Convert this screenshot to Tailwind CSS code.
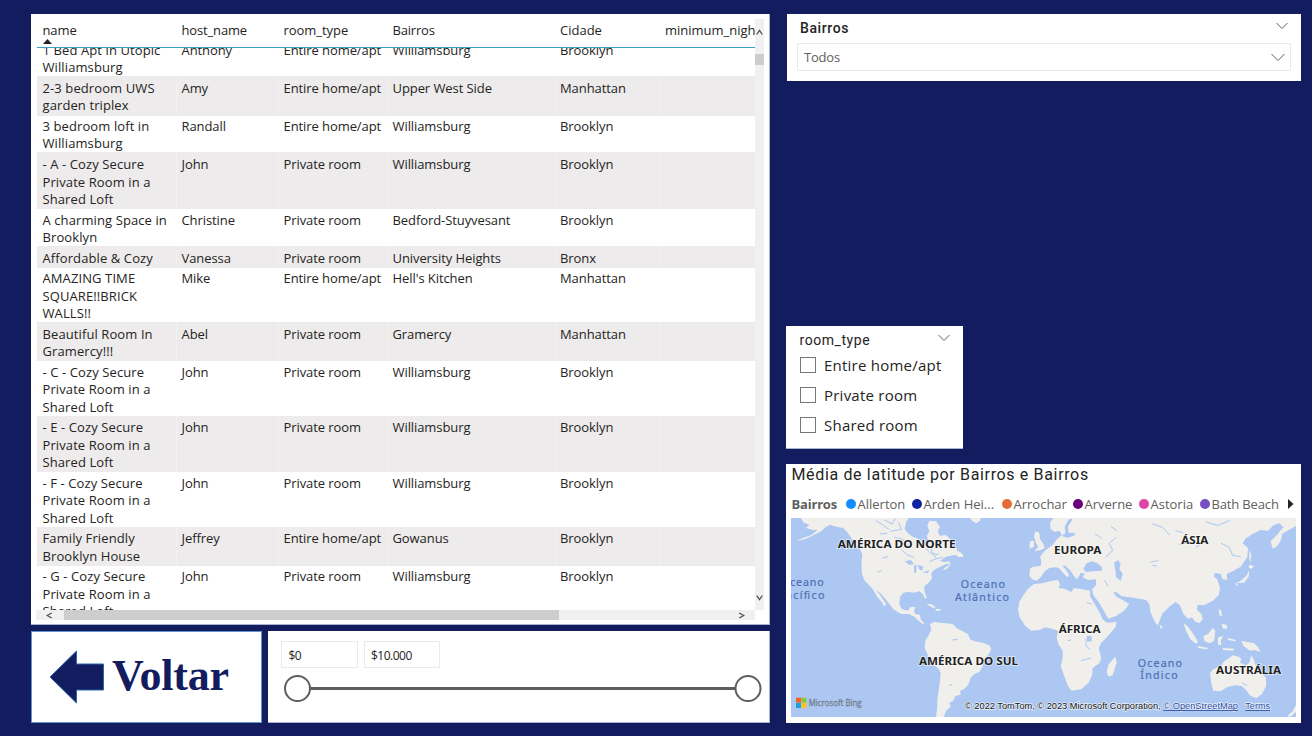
<!DOCTYPE html>
<html lang="pt">
<head>
<meta charset="utf-8">
<title>Airbnb NYC</title>
<script src="https://cdn.jsdelivr.net/npm/@tailwindcss/browser@4"></script>
</head>
<body class="w-[1312px] h-[736px] overflow-hidden bg-[#141c60] font-['Open_Sans','Noto_Sans',sans-serif] text-[#252423]">
<main class="flex h-full pt-[14px] pl-[31px] pr-[11px] pb-[13px] justify-between">

  <div class="flex w-[739px] flex-col gap-[6px]">
    <section class="relative h-[611px] border-b border-r border-[#a9b4d0] bg-white pl-[6px] pt-[5px]">
      <div class="flex">
        <div class="w-[718px]">
          <div class="grid h-[29px] grid-cols-[139px_102px_109px_167.5px_105px_95.5px] overflow-hidden whitespace-nowrap border-b border-[#3d9fc6] text-[13px] leading-[22px] *:pl-[5.5px]">
            <div class="relative tracking-[-0.1px]">name
              <svg class="absolute left-[6px] top-[20px] h-[5px] w-[9px]" viewBox="0 0 9 5"><path d="M0 5 4.5 0 9 5z" fill="#252423"/></svg>
            </div>
            <div class="tracking-[-0.15px]">host_name</div><div class="tracking-[-0.05px]">room_type</div><div class="tracking-[-0.2px]">Bairros</div><div>Cidade</div><div class="overflow-hidden">minimum_nights</div>
          </div>
          <div id="rows" class="h-[562px] overflow-hidden text-[13px] leading-[17.4px]"></div>
        </div>
        <div class="flex h-[591px] w-[9px] flex-col items-center bg-[#f0f0f0]">
          <svg class="mt-[10px] h-[7px] w-[7px]" viewBox="0 0 7 7" fill="none" stroke="#505050" stroke-width="1.3"><path d="M.7 5.5 3.5 1.5 6.3 5.5"/></svg>
          <div class="mt-[18px] h-[11px] w-[9px] bg-[#cdcdcd]"></div>
          <svg class="mt-auto mb-[9px] h-[7px] w-[7px]" viewBox="0 0 7 7" fill="none" stroke="#505050" stroke-width="1.3"><path d="M.7 1.5 3.5 5.5 6.3 1.5"/></svg>
        </div>
      </div>
      <div class="-ml-px flex h-[10px] w-[719px] items-center bg-[#f0f0f0]">
        <svg class="ml-[10px] h-[7px] w-[7px]" viewBox="0 0 7 7" fill="none" stroke="#505050" stroke-width="1.3"><path d="M5.7 1 1.2 3.5 5.7 6"/></svg>
        <div class="ml-[11px] h-[10px] w-[495px] bg-[#cdcdcd]"></div>
        <svg class="ml-[179px] h-[7px] w-[7px]" viewBox="0 0 7 7" fill="none" stroke="#505050" stroke-width="1.3"><path d="M1.2 1 5.7 3.5 1.2 6"/></svg>
      </div>
    </section>

    <div class="flex h-[92px] gap-[6px]">
      <a class="flex w-[231px] items-center border border-[#5f94cc] bg-white pl-[17px]">
        <svg class="h-[54px] w-[56px]" viewBox="0 0 56 54"><path d="M1 27 27.500 1V14H54.500V40H27.500V53z" fill="#141c60" stroke="#2a65ae" stroke-width="1"/></svg>
        <span class="ml-[7px] -mt-[2px] font-['Liberation_Serif',serif] text-[44px] font-bold leading-none tracking-[-0.2px] text-[#141c60]">Voltar</span>
      </a>
      <section class="w-[502px] border-b border-r border-[#a9b4d0] bg-white pl-[13px] pt-[10px]">
        <div class="flex gap-[6px] text-[12px] leading-[27px] *:h-[27px] *:w-[76.5px] *:border *:border-[#eaeaea] *:pl-[6.500px]">
          <div><span class="tracking-[-0.5px]">$0</span></div><div><span class="tracking-[-0.5px]">$10.000</span></div>
        </div>
        <svg class="ml-[2px] mt-[5px] h-[30px] w-[480px]" viewBox="0 0 480 30" fill="#fff" stroke="#605e5c"><path d="M27 15.500H452" stroke-width="3"/><circle cx="14.500" cy="15.500" r="12.500" stroke-width="2"/><circle cx="465" cy="15.500" r="12.500" stroke-width="2"/></svg>
      </section>
    </div>
  </div>

  <div class="flex w-[515px] flex-col">
    <section class="ml-px h-[67px] bg-white px-[10px] pt-[5px]">
      <div class="flex h-[24px] justify-between pl-[3px] pr-[3px]">
        <h2 class="font-[Roboto,sans-serif] text-[14px] font-medium leading-[19px] tracking-[0.6px]">Bairros</h2>
        <svg class="mt-[3px] h-[8px] w-[12px]" viewBox="0 0 12 8" fill="none" stroke="#605e5c"><path d="M.5 1 6 6.500 11.500 1"/></svg>
      </div>
      <div class="flex h-[28px] items-center justify-between border border-[#eaeaea] pl-[6px] pr-[5px] text-[13px] text-[#605e5c]">
        <span class="pt-[2px] tracking-[-0.2px]">Todos</span>
        <svg class="h-[9px] w-[14px]" viewBox="0 0 14 9" fill="none" stroke="#605e5c"><path d="M.5 1 7 7.500 13.500 1"/></svg>
      </div>
    </section>

    <section class="mt-[245px] h-[123px] w-[177px] border-b border-[#a9b4d0] bg-white pl-[13px] pt-[5px]">
      <div class="flex h-[19px] justify-between pr-[13px]">
        <h2 class="pl-[0.5px] font-[Roboto,sans-serif] text-[14px] leading-[19px] tracking-[0.55px]">room_type</h2>
        <svg class="mt-[3px] h-[8px] w-[12px]" viewBox="0 0 12 8" fill="none" stroke="#605e5c"><path d="M.5 1 6 6.500 11.500 1"/></svg>
      </div>
      <ul class="text-[15px] tracking-[0.23px] *:flex *:h-[30px] *:items-center *:gap-[8.500px]">
        <li><i class="ml-[0.5px] size-[16px] border border-[#777]"></i>Entire home/apt</li>
        <li><i class="ml-[0.5px] size-[16px] border border-[#777]"></i>Private room</li>
        <li><i class="ml-[0.5px] size-[16px] border border-[#777]"></i>Shared room</li>
      </ul>
    </section>

    <section class="mt-[15px] h-[259px] bg-white px-[5px]">
      <h2 class="h-[28px] pl-[0.5px] font-[Roboto,sans-serif] text-[16px] leading-[21px] tracking-[0.65px] whitespace-nowrap">Média de latitude por Bairros e Bairros</h2>
      <div class="mb-[2px] flex h-[24px] items-center whitespace-nowrap pl-[0.5px] text-[13px] leading-[20px] text-[#605e5c]">
        <b class="w-[54px] tracking-[-0.2px]">Bairros</b>
        <span class="flex w-[66px] items-center gap-[2px]"><i class="size-[10px] shrink-0 rounded-full bg-[#118dff]"></i>Allerton</span>
        <span class="flex w-[90px] items-center gap-[2px]"><i class="size-[10px] shrink-0 rounded-full bg-[#12239e]"></i>Arden Hei...</span>
        <span class="flex w-[71px] items-center gap-[2px]"><i class="size-[10px] shrink-0 rounded-full bg-[#e66c37]"></i>Arrochar</span>
        <span class="flex w-[66px] items-center gap-[2px]"><i class="size-[10px] shrink-0 rounded-full bg-[#6b007b]"></i>Arverne</span>
        <span class="flex w-[61px] items-center gap-[2px]"><i class="size-[10px] shrink-0 rounded-full bg-[#e044a7]"></i>Astoria</span>
        <span class="flex w-[88.5px] items-center gap-[2px] tracking-[-0.15px]"><i class="size-[10px] shrink-0 rounded-full bg-[#744ec2]"></i>Bath Beach</span>
        <svg class="h-[10px] w-[6px]" viewBox="0 0 6 10"><path d="M0 0 5.500 5 0 10z" fill="#252423"/></svg>
      </div>
      <svg class="block h-[199px] w-[505px]" viewBox="15 12 1515 597">
        <rect x="15" y="12" width="1515" height="597" fill="#abc7f2"/>
        <g fill="#f0efec">
          <!-- North America -->
          <path d="M45 12 52 25 70 33 60 42 80 48 95 47 78 62 50 72 28 82 58 75 85 62 108 50 118 40 132 32 150 38 172 42 185 56 196 72 210 92 222 106 229 122 226 150 228 180 236 200 248 212 262 228 272 246 285 262 296 278 300 270 290 254 278 238 270 228 282 236 296 252 310 270 322 286 345 300 368 300 385 308 398 320 412 332 414 326 404 316 402 302 388 300 384 292 388 278 372 280 366 290 348 286 340 270 342 248 352 236 368 234 384 236 400 232 410 240 418 256 422 250 416 234 414 218 430 204 438 192 436 178 444 168 462 158 480 150 495 150 478 160 470 168 482 166 494 152 490 142 474 144 462 140 480 128 500 124 518 122 512 104 500 92 494 76 478 62 462 66 455 52 462 38 450 22 430 20 424 34 430 52 422 66 430 84 418 96 408 82 396 74 380 68 366 58 356 44 360 28 368 12z"/>
          <path d="M516 110 530 120 532 128 520 130 510 124zM552 12 560 22 572 28 582 20 584 12zM422 270 436 270 450 280 440 282zM448 284 466 286 462 290 450 290z"/>
          <!-- South America -->
          <path d="M432 330 446 324 462 326 480 328 500 330 512 342 530 352 546 360 552 376 566 382 590 386 610 394 616 406 606 424 594 438 590 458 580 474 562 482 554 492 548 510 536 524 522 530 524 542 508 546 502 560 490 566 494 578 480 590 474 609 450 609 454 580 454 556 458 530 462 500 464 478 458 464 440 450 428 428 416 402 418 380 428 364 436 348z"/>
          <!-- Eurasia -->
          <path d="M802 12 792 26 794 46 806 54 820 50 828 62 814 74 800 92 788 102 776 110 762 128 766 140 764 156 742 158 732 164 730 184 738 196 752 200 764 190 776 172 790 162 808 160 818 162 832 178 844 190 850 184 840 168 830 156 836 154 852 168 862 184 872 196 880 186 884 176 896 178 890 190 906 198 930 196 930 214 918 226 922 244 936 262 950 284 962 306 968 314 990 306 1014 290 1030 270 1010 258 992 248 982 236 990 234 1006 246 1030 250 1060 254 1080 258 1090 270 1094 296 1108 326 1116 334 1122 316 1130 298 1150 278 1168 264 1182 274 1192 300 1206 314 1218 310 1226 322 1240 328 1250 316 1246 300 1232 286 1236 272 1254 274 1280 260 1298 244 1302 222 1294 196 1284 188 1286 176 1304 180 1310 196 1324 198 1322 180 1340 172 1364 158 1384 128 1386 102 1370 88 1378 74 1400 60 1424 48 1446 50 1462 34 1480 28 1492 40 1470 66 1454 82 1460 104 1474 96 1486 76 1488 60 1508 48 1530 36 1530 12z"/>
          <path d="M748 52 760 56 762 74 772 90 776 102 764 108 746 112 756 98 750 86 744 68zM732 82 744 80 744 98 730 104z"/>
          <!-- Africa -->
          <path d="M744 210 768 208 800 200 816 198 822 210 818 222 836 224 856 234 864 222 888 226 912 230 912 246 926 270 940 294 950 316 962 326 992 324 988 340 966 366 946 386 938 402 946 432 940 448 920 462 918 484 908 506 886 526 856 530 846 516 834 484 824 456 830 432 830 410 818 392 812 372 816 350 798 344 778 340 760 348 736 350 718 336 702 312 696 288 700 264 712 244 726 224z"/>
          <path d="M988 428 992 446 980 484 968 488 962 474 968 450zM1124 330 1130 342 1122 344z"/>
          <!-- South-East Asia, Japan -->
          <path d="M1192 326 1206 338 1222 360 1236 384 1230 390 1212 374 1200 350zM1236 396 1266 402 1262 406 1236 402zM1252 366 1266 360 1280 342 1288 350 1284 380 1272 388 1256 382zM1296 370 1312 366 1304 380 1306 394 1296 392zM1298 284 1306 290 1308 308 1300 304zM1306 330 1322 332 1324 344 1312 344zM1366 380 1384 384 1404 388 1416 400 1424 414 1406 408 1392 410 1372 396zM1390 152 1404 156 1398 164 1388 162zM1390 168 1388 188 1374 206 1352 208 1370 196 1382 184zM1348 204 1356 212 1350 216zM1390 108 1396 122 1394 146 1390 132zM1326 372 1350 378 1348 382 1326 378zM1310 402 1346 404 1340 410 1312 408z"/>
          <!-- Oceania -->
          <path d="M1272 478 1282 466 1304 456 1316 440 1330 432 1340 424 1358 428 1366 434 1362 446 1380 454 1390 446 1396 424 1404 438 1410 456 1424 474 1440 492 1440 516 1428 540 1412 552 1394 546 1378 526 1366 516 1348 514 1322 520 1304 532 1282 530 1276 508zM1530 572 1520 592 1504 606 1512 609 1530 594z"/>
        </g>
        <g fill="#abc7f2">
          <!-- Seas and lakes -->
          <path d="M892 166 902 148 918 142 934 148 948 160 948 170 924 172 900 174zM984 146 996 138 1004 150 1000 164 1010 180 1004 200 990 190 988 168zM356 142 374 138 384 150 370 152zM384 154 392 154 390 176 384 176zM396 152 412 158 408 170 398 164zM408 176 430 168 426 176zM828 66 846 72 868 62 864 56 848 56 846 38 860 14 848 16 836 38 838 56zM902 366 916 366 918 380 904 384zM358 20 390 70 412 70 404 50 382 46 376 28z"/>
        </g>
        <g fill="none" stroke="#abc7f2" stroke-width="3" stroke-linecap="round">
          <path d="M270 20 292 34 308 46M296 18 318 30 328 14M314 52 346 46 338 26M282 60 302 58M326 70 350 76 364 94M348 108 362 122 384 130M290 132 306 128M276 174 286 170M420 104 434 118 456 122M440 84 436 110 450 132M432 142 452 134 470 130M960 128 980 110 970 88 990 70M976 38 992 50M1100 30 1130 40 1150 62M1094 144 1116 140M1100 154 1112 156M1180 92 1216 84M1230 100 1254 84M1306 88 1330 100 1340 124 1364 128M1260 24 1296 34 1330 20M1170 50 1190 56M900 376 900 396 912 406M886 440 914 432M846 380 854 378M500 378 514 376M490 514 498 512M956 200 966 216M904 266 916 270M1370 508 1382 514M928 60 946 72"/>
        </g>
        <g class="font-['Noto_Sans','Open_Sans',sans-serif]" font-size="34" font-weight="700" fill="#222" stroke="#fff" stroke-opacity=".65" stroke-width="5" paint-order="stroke">
          <text x="155" y="102" textLength="354" lengthAdjust="spacingAndGlyphs">AMÉRICA DO NORTE</text>
          <text x="804" y="121" textLength="142" lengthAdjust="spacingAndGlyphs">EUROPA</text>
          <text x="1186" y="90" textLength="81" lengthAdjust="spacingAndGlyphs">ÁSIA</text>
          <text x="818" y="356" textLength="126" lengthAdjust="spacingAndGlyphs">ÁFRICA</text>
          <text x="399" y="454" textLength="297" lengthAdjust="spacingAndGlyphs">AMÉRICA DO SUL</text>
          <text x="1290" y="479" textLength="195" lengthAdjust="spacingAndGlyphs">AUSTRÁLIA</text>
        </g>
        <g class="font-['Noto_Sans','Open_Sans',sans-serif]" font-size="32" fill="#5070b4" stroke="#5070b4" stroke-width=".6">
          <text x="-15" y="217" textLength="128">Oceano</text>
          <text x="-23" y="255" textLength="138">Pacífico</text>
          <text x="524" y="223" textLength="133">Oceano</text>
          <text x="507" y="260" textLength="162">Atlântico</text>
          <text x="1055" y="458" textLength="133">Oceano</text>
          <text x="1063" y="495" textLength="112">Índico</text>
        </g>
        <path d="M30 551h15v15H30z" fill="#f0642c"/><path d="M46 551h15v15H46z" fill="#8cc63e"/><path d="M30 567h15v15H30z" fill="#1ba1e2"/><path d="M46 567h15v15H46z" fill="#fcc419"/>
        <text x="68" y="576" class="font-['Open_Sans',sans-serif]" font-size="26" fill="#747a88" stroke="#747a88" stroke-width=".8" textLength="159" lengthAdjust="spacingAndGlyphs">Microsoft Bing</text>
        <g class="font-['Liberation_Sans',sans-serif]" font-size="29" fill="#111" stroke="#fff" stroke-opacity=".8" stroke-width="4" paint-order="stroke">
          <text x="537" y="586" textLength="587" lengthAdjust="spacingAndGlyphs">© 2022 TomTom, © 2023 Microsoft Corporation,</text>
          <g fill="#2b4ba0"><text x="1132" y="586" textLength="224" lengthAdjust="spacingAndGlyphs">© OpenStreetMap</text>
          <text x="1378" y="586" textLength="74" lengthAdjust="spacingAndGlyphs">Terms</text></g>
        </g>
        <path d="M1132 589.500H1356M1378 589.500H1452" stroke="#2b4ba0" stroke-width="2.500"/>
      </svg>
    </section>
  </div>
</main>

<script>
// [height, text offset, shaded, name lines, host, room type, neighbourhood, city]
const rows = [
  [28, -6.1, 0, '1 Bed Apt in Utopic<br>Williamsburg', 'Anthony', 'Entire home/apt', 'Williamsburg', 'Brooklyn'],
  [40, 3.9, 1, '2-3 bedroom UWS<br>garden triplex', 'Amy', 'Entire home/apt', 'Upper West Side', 'Manhattan'],
  [36, 1.9, 0, '3 bedroom loft in<br>Williamsburg', 'Randall', 'Entire home/apt', 'Williamsburg', 'Brooklyn'],
  [57, 4.3, 1, '- A - Cozy Secure<br>Private Room in a<br>Shared Loft', 'John', 'Private room', 'Williamsburg', 'Brooklyn'],
  [37, 2.9, 0, 'A charming Space in<br>Brooklyn', 'Christine', 'Private room', 'Bedford-Stuyvesant', 'Brooklyn'],
  [22, 4.3, 1, 'Affordable &amp; Cozy', 'Vanessa', 'Private room', 'University Heights', 'Bronx'],
  [54, 2.3, 0, 'AMAZING TIME<br>SQUARE!!BRICK<br>WALLS!!', 'Mike', 'Entire home/apt', "Hell's Kitchen", 'Manhattan'],
  [39, 3.9, 1, 'Beautiful Room In<br>Gramercy!!!', 'Abel', 'Private room', 'Gramercy', 'Manhattan'],
  [55, 2.9, 0, '- C - Cozy Secure<br>Private Room in a<br>Shared Loft', 'John', 'Private room', 'Williamsburg', 'Brooklyn'],
  [56, 3.3, 1, '- E - Cozy Secure<br>Private Room in a<br>Shared Loft', 'John', 'Private room', 'Williamsburg', 'Brooklyn'],
  [55, 2.9, 0, '- F - Cozy Secure<br>Private Room in a<br>Shared Loft', 'John', 'Private room', 'Williamsburg', 'Brooklyn'],
  [39, 3.3, 1, 'Family Friendly<br>Brooklyn House', 'Jeffrey', 'Entire home/apt', 'Gowanus', 'Brooklyn'],
  [56, 2.3, 0, '- G - Cozy Secure<br>Private Room in a<br>Shared Loft', 'John', 'Private room', 'Williamsburg', 'Brooklyn'],
];
document.getElementById('rows').innerHTML = rows.map(([h, top, shaded, ...cells]) =>
  `<div class="grid grid-cols-[139px_102px_109px_167.5px_105px_95.5px] overflow-hidden whitespace-nowrap ${shaded ? 'bg-[#edebeb]' : 'bg-white'}" style="height:${h}px">` +
  [...cells, ''].map((c, i) => `<div class="${i ? 'border-l border-white/30 pl-[4.5px] tracking-[-0.08px]' : 'pl-[5.5px] tracking-[0.1px]'}"><div style="margin-top:${top}px">${c}</div></div>`).join('') + '</div>').join('');
</script>
</body>
</html>
